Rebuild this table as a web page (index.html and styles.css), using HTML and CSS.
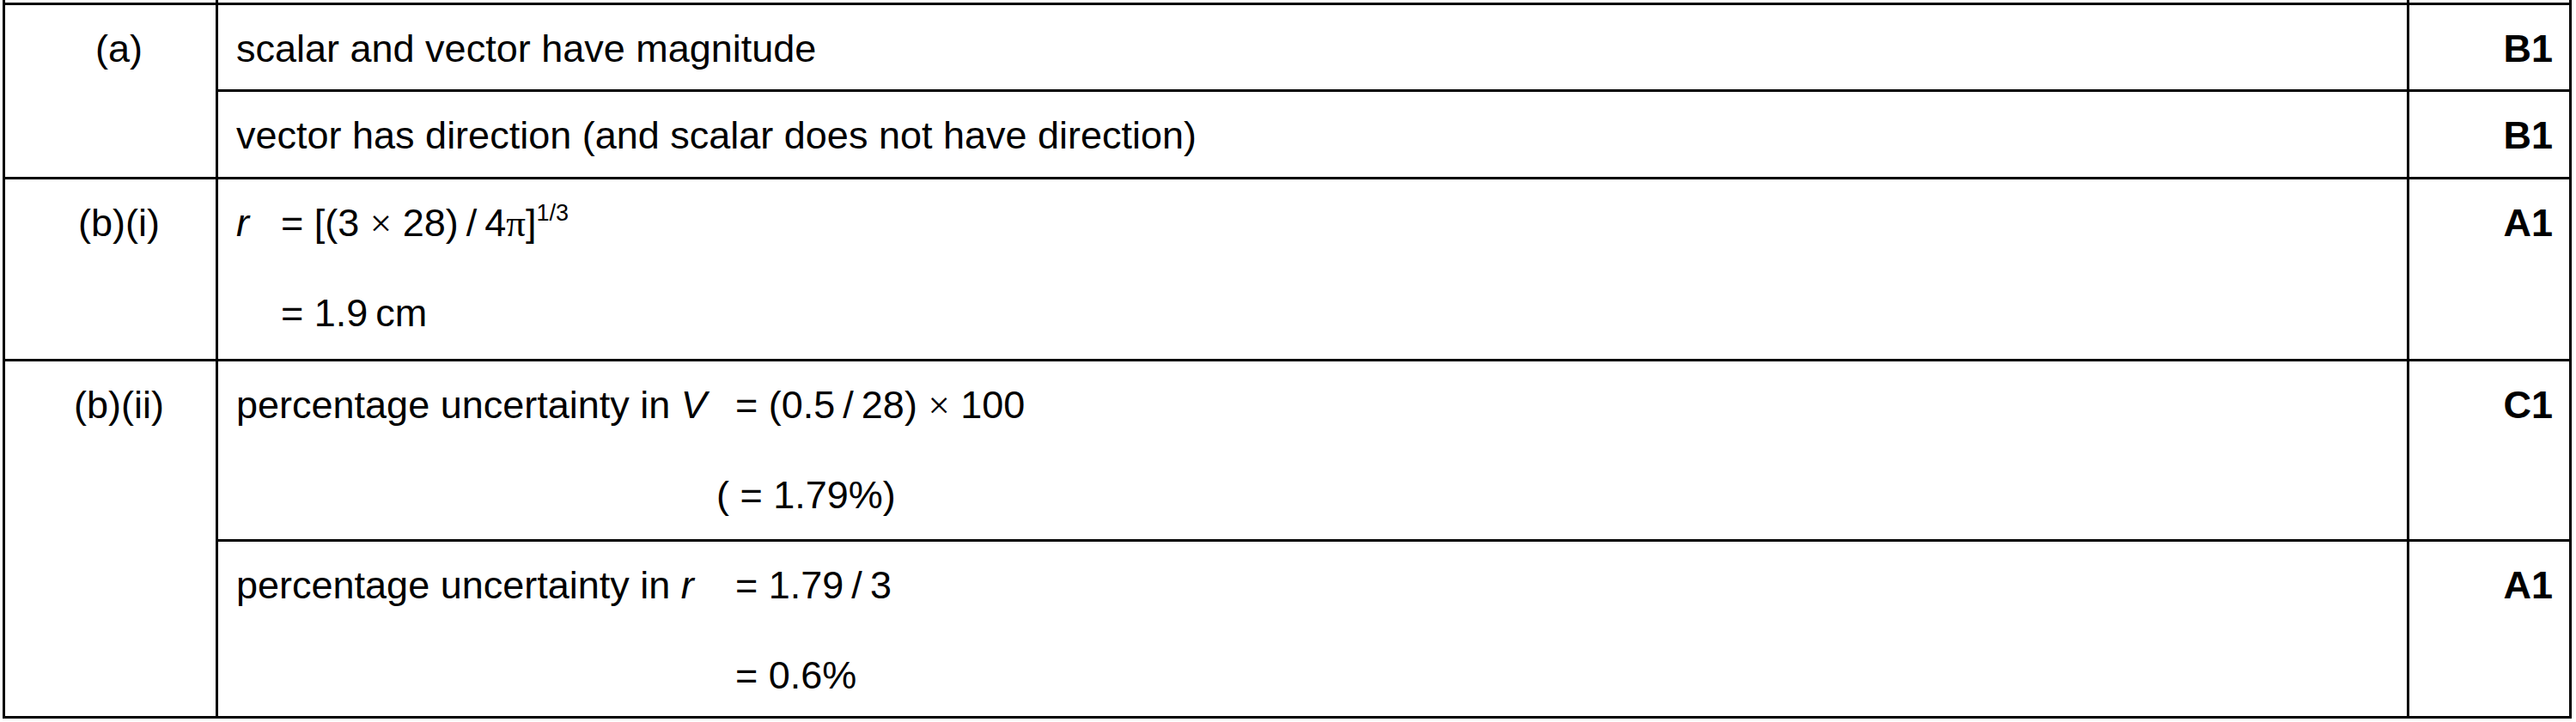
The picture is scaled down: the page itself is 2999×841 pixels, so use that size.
FILE: index.html
```html
<!DOCTYPE html>
<html lang="en">
<head>
<meta charset="utf-8">
<title>Mark scheme</title>
<link rel="stylesheet" href="styles.css">
</head>
<body>
<div class="sheet">
  <div class="stub"></div><div class="stub"></div><div class="stub"></div>

  <div class="cell part span2">(a)</div>
  <div class="cell ans"><p>scalar and vector have magnitude</p></div>
  <div class="cell mark">B1</div>
  <div class="cell ans"><p>vector has direction (and scalar does not have direction)</p></div>
  <div class="cell mark">B1</div>

  <div class="cell part">(b)(i)</div>
  <div class="cell ans">
    <p class="eq"><span class="lhs lhs-r"><i>r</i></span><span>= [(3 <span class="sym">×</span> 28)&thinsp;/&thinsp;4<span class="sym">π</span>]<sup>1/3</sup></span></p>
    <p class="eq"><span class="lhs lhs-r"></span><span>= 1.9&thinsp;cm</span></p>
  </div>
  <div class="cell mark">A1</div>

  <div class="cell part span2">(b)(ii)</div>
  <div class="cell ans">
    <p class="eq"><span class="lhs lhs-p">percentage uncertainty in <i>V</i></span><span>= (0.5&thinsp;/&thinsp;28) <span class="sym">×</span> 100</span></p>
    <p class="eq"><span class="lhs lhs-paren"></span><span>( = 1.79%)</span></p>
  </div>
  <div class="cell mark">C1</div>
  <div class="cell ans">
    <p class="eq"><span class="lhs lhs-p">percentage uncertainty in <i>r</i></span><span>= 1.79&thinsp;/&thinsp;3</span></p>
    <p class="eq"><span class="lhs lhs-p"></span><span>= 0.6%</span></p>
  </div>
  <div class="cell mark">A1</div>
</div>
</body>
</html>
```

FILE: styles.css
```css
html, body {
  margin: 0;
  padding: 0;
  background: #ffffff;
}

body {
  font-family: "Liberation Sans", Arial, sans-serif;
  font-size: 45px;
  color: #000000;
}

.sheet {
  display: grid;
  grid-template-columns: 245px 2548px 186px;
  grid-template-rows: 3px 98px 99px 209px 207px 203px;
  gap: 3px;
  width: max-content;
  margin-left: 3px;
  padding: 0 3px 3px 3px;
  background: #000000;
}

.stub {
  background: #ffffff;
}

.cell {
  background: #ffffff;
  padding-top: 25px;
  line-height: 52px;
  white-space: nowrap;
}

.cell p {
  margin: 0;
  line-height: 52px;
}

.cell p + p {
  margin-top: 53px;
}

.span2 {
  grid-row: span 2;
}

.part {
  text-align: center;
  padding-left: 20px;
}

.ans {
  padding-left: 21px;
}

.mark {
  text-align: right;
  font-weight: bold;
  padding-right: 19px;
}

.eq {
  display: flex;
  align-items: baseline;
}

.lhs {
  display: inline-block;
  flex: none;
}

.lhs-r {
  width: 52px;
}

.lhs-p {
  width: 581px;
}

.lhs-paren {
  width: 559px;
}

.sym {
  font-family: "Liberation Serif", "Times New Roman", serif;
}

sup {
  font-size: 27px;
  line-height: 0;
  vertical-align: 18px;
}
```
